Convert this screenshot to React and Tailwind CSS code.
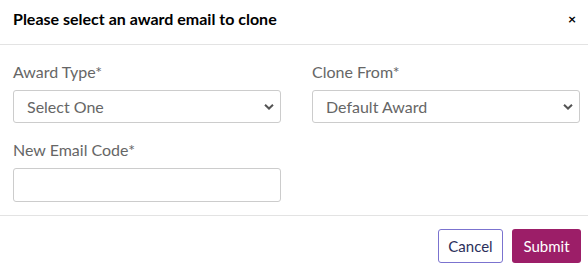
import { useState } from 'react'

const Chevron = () => (
  <svg className="pointer-events-none absolute right-[7px] top-1/2 -translate-y-1/2" width="10" height="7" viewBox="0 0 10 7">
    <path d="M1 1.2 L5 5 L9 1.2" fill="none" stroke="#555" strokeWidth="2" />
  </svg>
)

const Field = ({ label, children }) => (
  <div className="flex flex-col">
    <label className="text-[16px] leading-[20px] text-[#666] mb-[8px]">{label}</label>
    {children}
  </div>
)

const Select = ({ value, options }) => {
  const [v, setV] = useState(value)
  return (
    <div className="relative">
      <select
        value={v}
        onChange={(e) => setV(e.target.value)}
        className="appearance-none w-full h-[33px] rounded-[3px] border border-[#ccc] bg-white pl-[13px] text-[16px] text-[#666] outline-none"
      >
        {options.map((o) => (
          <option key={o}>{o}</option>
        ))}
      </select>
      <Chevron />
    </div>
  )
}

export default function App() {
  return (
    <div className="w-[588px] h-[268px] bg-white" style={{ fontFamily: 'Lato, "Open Sans", sans-serif' }}>
      <div className="h-[45px] flex items-start justify-between pl-[13px] pr-[12px] pt-[8px] border-b border-[#e3e3e3]">
        <h2 className="text-[16px] leading-[22px] font-bold text-black">Please select an award email to clone</h2>
        <button className="text-[14px] font-bold text-black leading-[22px]">×</button>
      </div>
      <div className="pl-[13px] pr-[8px] pt-[17px] pb-[13px] border-b border-[#e3e3e3]">
        <div className="grid grid-cols-2 gap-x-[31px]">
          <Field label="Award Type*">
            <Select value="Select One" options={['Select One']} />
          </Field>
          <Field label="Clone From*">
            <Select value="Default Award" options={['Default Award']} />
          </Field>
          <div className="mt-[17px]">
            <Field label="New Email Code*">
              <input className="w-full h-[34px] rounded-[3px] border border-[#ccc] outline-none px-[13px]" />
            </Field>
          </div>
        </div>
      </div>
      <div className="flex justify-end gap-[9px] pr-[7px] pt-[13px]">
        <button className="h-[34px] w-[65px] rounded-[3px] border border-[#7b73cf] text-[15px] text-[#2b2f5a]">Cancel</button>
        <button className="h-[34px] w-[69px] rounded-[3px] bg-[#9c1e68] text-[15px] text-white">Submit</button>
      </div>
    </div>
  )
}
